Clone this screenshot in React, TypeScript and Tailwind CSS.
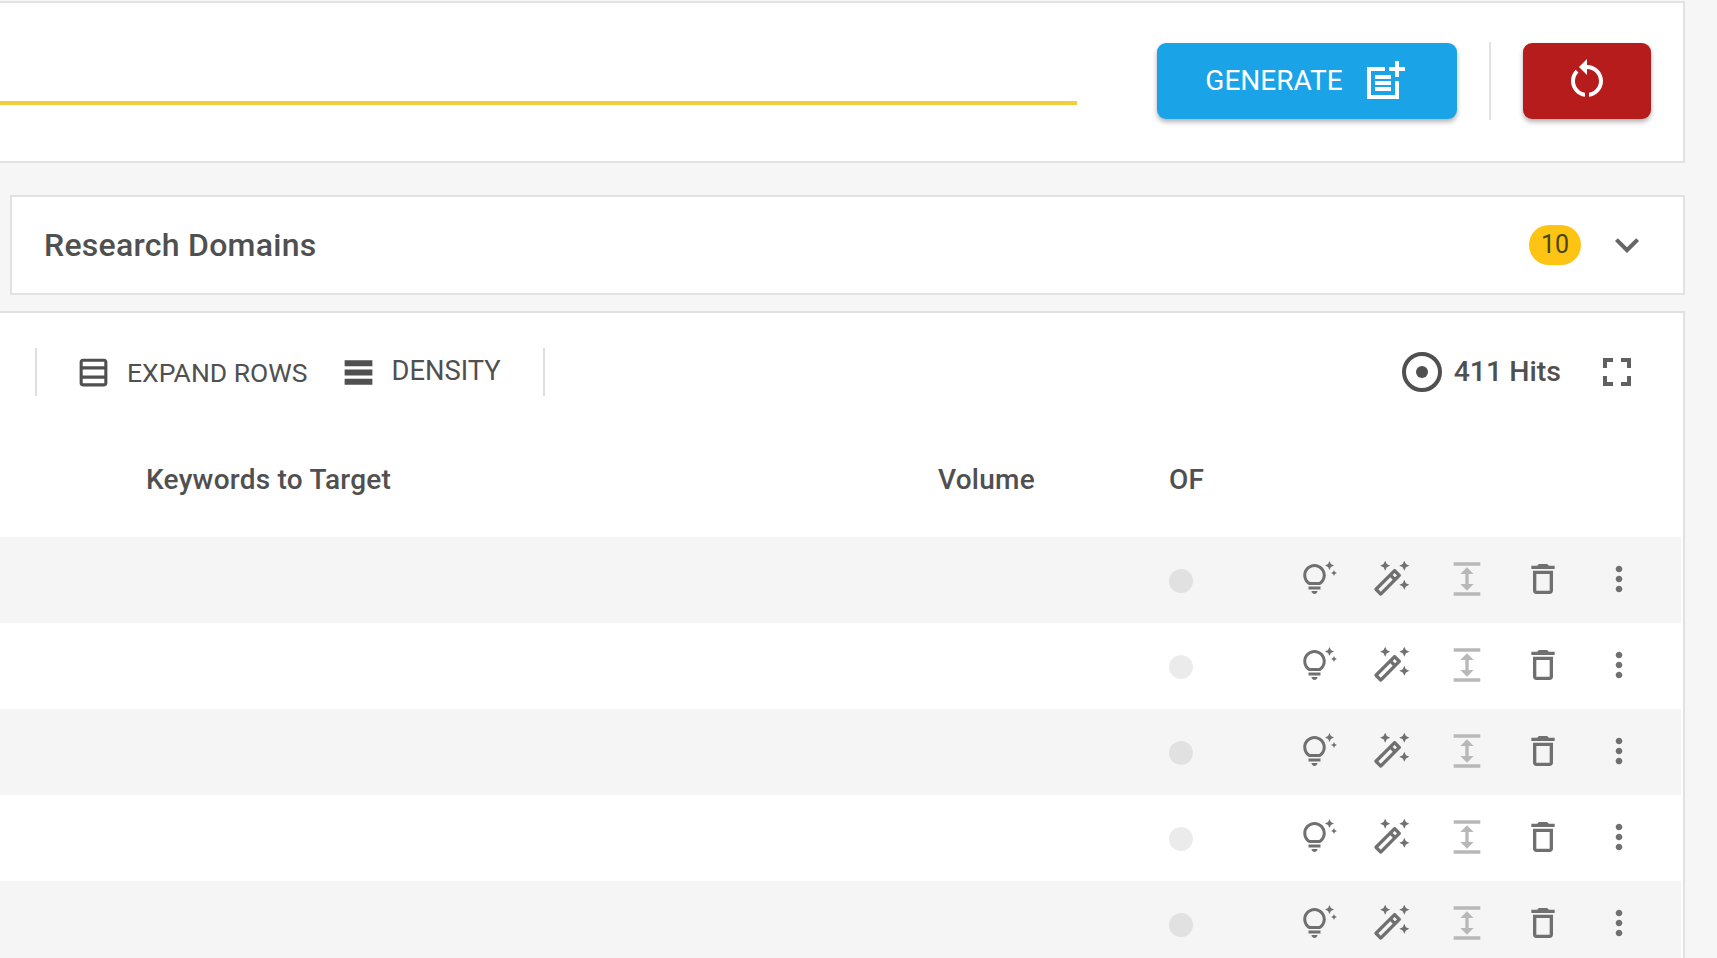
import React from 'react';
import {
  MdExpand,
  MdFullscreen,
  MdKeyboardArrowDown,
  MdMoreVert,
  MdOutlineAutoFixHigh,
  MdOutlineDelete,
  MdOutlineTableRows,
  MdOutlineTipsAndUpdates,
  MdRestartAlt,
} from 'react-icons/md';

const PostAddIcon = () => (
  <svg viewBox="0 0 24 24" className="w-[48px] h-[48px] fill-white">
    <path d="M17 19H5V7h7V5H3v16h16v-9h-2zM19 2h-2v3h-3v2h3v3h2V7h3V5h-3zM7 9h8v2H7zm0 3h8v2H7zm0 3h8v2H7z" />
  </svg>
);

const DensityIcon = () => (
  <svg viewBox="0 0 24 24" className="w-[37px] h-[37px] fill-[#505050]">
    <path d="M3 8V4h18v4zM3 14v-4h18v4zM3 20v-4h18v4z" />
  </svg>
);

const HitsIcon = () => (
  <svg viewBox="0 0 24 24" className="w-[48px] h-[48px] fill-none stroke-[#505050]">
    <circle cx="12" cy="12" r="9" strokeWidth="2" />
    <circle cx="12" cy="12" r="3" className="fill-[#505050] stroke-none" />
  </svg>
);

const Row = ({ shaded }: { shaded: boolean }) => (
  <div className={`grid grid-cols-[1169px_1fr] items-center h-[86px] shrink-0 mr-[2px] pb-[3px] ${shaded ? 'bg-[#f5f5f5]' : 'bg-white'}`}>
    <div />
    <div className="flex items-center">
      <div className="w-[24px] h-[24px] rounded-full bg-black/[0.08] mt-[4px]" />
      <div className="flex items-center ml-[89px] text-[#707070]">
        <span className="w-[74px] flex justify-center"><MdOutlineTipsAndUpdates size={36} /></span>
        <span className="w-[70px] flex justify-center"><MdOutlineAutoFixHigh size={40} /></span>
        <span className="w-[82px] flex justify-center text-[#b8b8b8]"><MdExpand size={40} /></span>
        <span className="w-[70px] flex justify-center"><MdOutlineDelete size={40} /></span>
        <span className="w-[82px] flex justify-center"><MdMoreVert size={40} /></span>
      </div>
    </div>
  </div>
);

export default function App() {
  return (
    <div className="w-[1717px] h-[958px] overflow-hidden bg-[#f6f6f6] pr-[32px] pt-[1px] flex flex-col font-['Roboto',sans-serif] text-[#505050]">
      {/* Generate bar */}
      <div className="h-[162px] shrink-0 bg-white border-y-2 border-r-2 border-[#e2e2e2] flex items-center">
        <div className="w-[1077px] h-[60px] border-b-[4px] border-[#f2cf3a] self-start mt-[42px]" />
        <button className="ml-[80px] w-[300px] h-[76px] rounded-[9px] bg-[#1ba3e8] text-white text-[28px] flex items-center justify-center gap-[18px] shadow-[0_3px_5px_rgba(0,0,0,0.3)] -mt-[2px]">
          GENERATE
          <PostAddIcon />
        </button>
        <div className="w-[2px] h-[78px] bg-[#e2e2e2] ml-[32px] -mt-[3px]" />
        <button className="ml-[32px] w-[128px] h-[76px] rounded-[9px] bg-[#b71c1c] text-white flex items-center justify-center shadow-[0_3px_5px_rgba(0,0,0,0.3)] -mt-[2px]">
          <MdRestartAlt size={48} className="-mt-[5px]" />
        </button>
      </div>

      {/* Research Domains accordion */}
      <div className="h-[100px] shrink-0 mt-[32px] ml-[10px] bg-white border-2 border-[#e2e2e2] flex items-center pl-[32px] pr-[32px]">
        <span className="flex-1 text-[32px] font-medium tracking-[0.27px]">Research Domains</span>
        <span className="w-[52px] h-[40px] rounded-full bg-[#fdc414] text-[#4a4316] text-[25px] flex items-center justify-center">10</span>
        <span className="ml-[22px] text-[#666]"><MdKeyboardArrowDown size={48} /></span>
      </div>

      {/* Keyword table */}
      <div className="flex-1 mt-[16px] bg-white border-t-2 border-r-2 border-[#e2e2e2] flex flex-col overflow-hidden">
        <div className="h-[118px] shrink-0 flex items-center pl-[35px] pr-[42px]">
          <div className="w-[2px] h-[48px] bg-[#dedede]" />
          <MdOutlineTableRows size={37} className="ml-[38px]" />
          <span className="ml-[15px] text-[26.5px] mt-[2px]">EXPAND ROWS</span>
          <span className="ml-[32px]"><DensityIcon /></span>
          <span className="ml-[15px] text-[27.3px] -mt-[2px]">DENSITY</span>
          <div className="w-[2px] h-[48px] bg-[#dedede] ml-[42px]" />
          <div className="flex-1" />
          <HitsIcon />
          <span className="ml-[8px] text-[28.5px] font-medium">411 Hits</span>
          <MdFullscreen size={48} className="ml-[32px] text-[#606060]" />
        </div>
        <div className="h-[106px] shrink-0 grid grid-cols-[938px_231px_1fr] items-center text-[28px] font-medium tracking-[0.25px] pb-[8px]">
          <span className="pl-[146px]">Keywords to Target</span>
          <span>Volume</span>
          <span>OF</span>
        </div>
        {[true, false, true, false, true].map((shaded, i) => (
          <Row key={i} shaded={shaded} />
        ))}
      </div>
    </div>
  );
}
